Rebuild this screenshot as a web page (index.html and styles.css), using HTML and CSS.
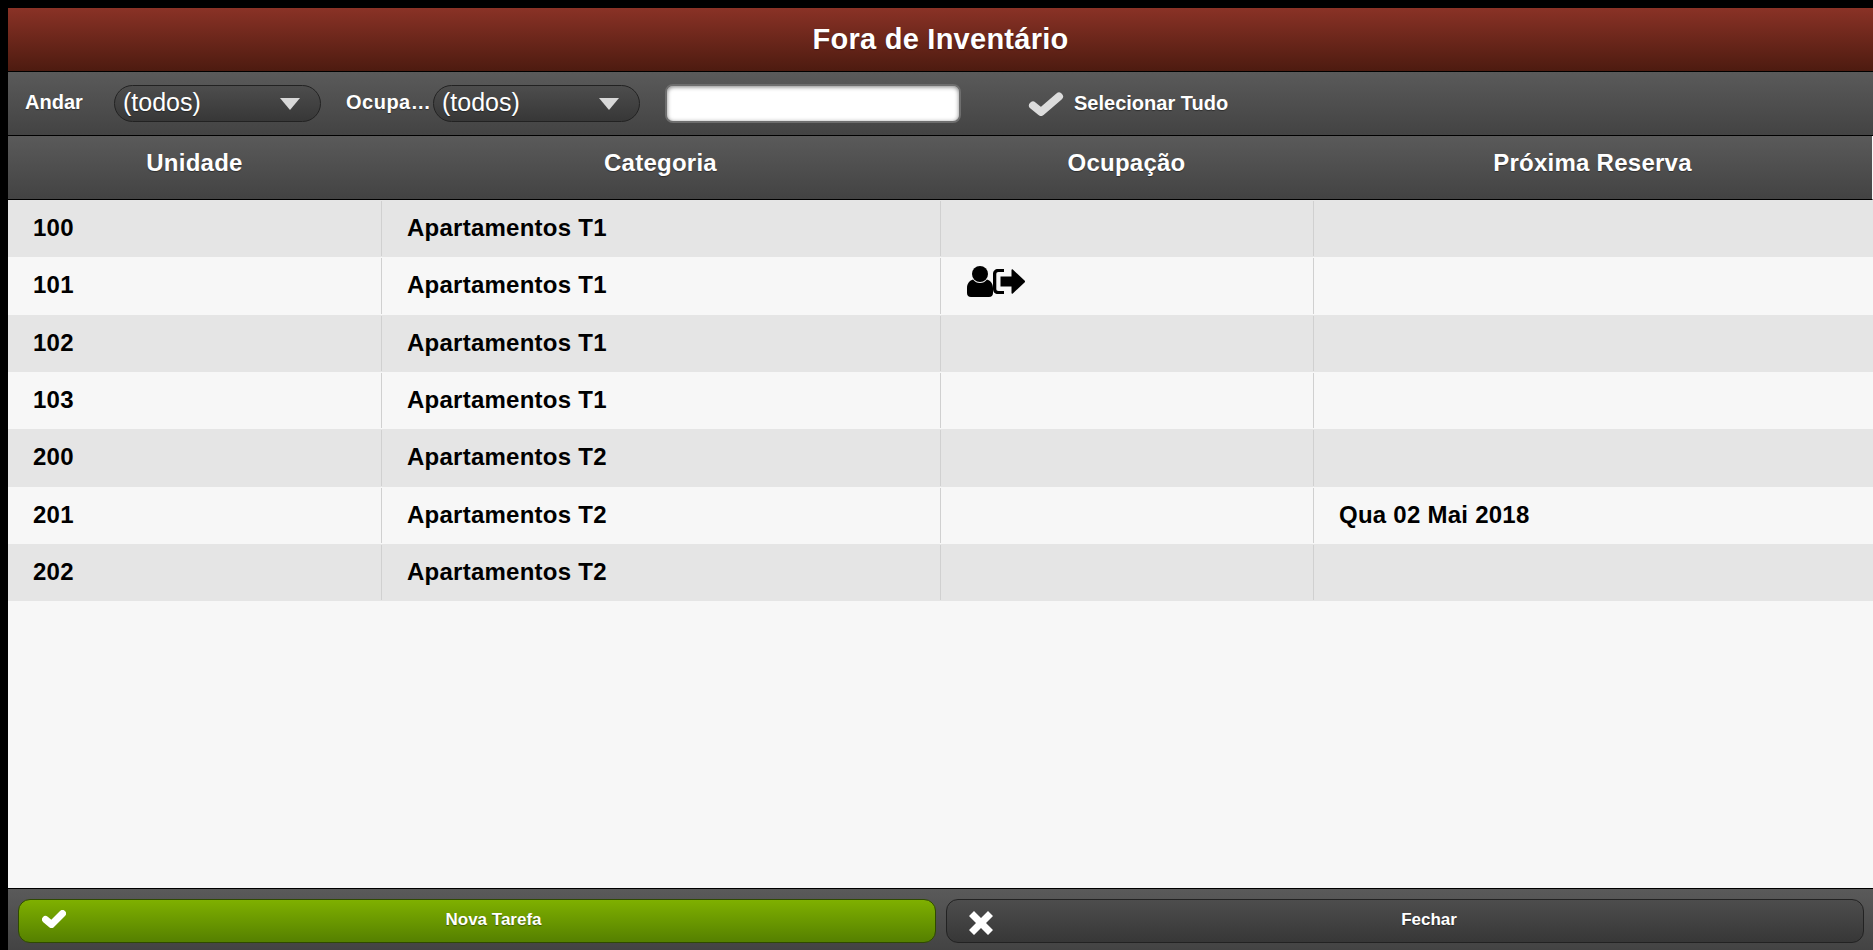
FILE: index.html
```html
<!DOCTYPE html>
<html lang="pt">

<head>
    <meta charset="UTF-8">
    <title>Fora de Inventário</title>
    <link rel="stylesheet" href="styles.css">
</head>

<body>
    <div class="page">
        <div class="title">Fora de Inventário</div>

        <div class="toolbar">
            <span class="label label-andar">Andar</span>
            <div class="select">
                <span>(todos)</span>
                <span class="arrow"></span>
            </div>
            <span class="label label-ocupa">Ocupa…</span>
            <div class="select">
                <span>(todos)</span>
                <span class="arrow"></span>
            </div>
            <input class="search" type="text">
            <div class="check-all">
                <svg class="check-icon" viewBox="0 0 36 24">
                    <path d="M5 13.500 L13 20 L31 4.500" fill="none" stroke="#dcdcdc" stroke-width="8" stroke-linecap="round" stroke-linejoin="round"/>
                </svg>
                <span>Selecionar Tudo</span>
            </div>
        </div>

        <div class="columns">
            <div>Unidade</div>
            <div>Categoria</div>
            <div>Ocupação</div>
            <div>Próxima Reserva</div>
        </div>

        <div class="list">
            <div class="row">
                <div class="cell">100</div>
                <div class="cell">Apartamentos T1</div>
                <div class="cell"></div>
                <div class="cell"></div>
            </div>
            <div class="row">
                <div class="cell">101</div>
                <div class="cell">Apartamentos T1</div>
                <div class="cell cell-icons">
                    <svg class="user-icon" viewBox="0 0 26 31">
                        <circle cx="13" cy="8" r="8"/>
                        <path d="M0 27 V22 C0 17 3 14.500 6 13.500 C8 16 10 17 13 17 C16 17 18 16 20 13.500 C23 14.500 26 17 26 22 V27 C26 29.500 24.500 31 22 31 H4 C1.500 31 0 29.500 0 27 Z"/>
                    </svg>
                    <svg class="out-icon" viewBox="0 0 32 25">
                        <path d="M11 0 H5 C2 0 0 2 0 5 V20 C0 23 2 25 5 25 H11 V22 H5.500 C4 22 3.300 21.300 3.300 19.800 V5.200 C3.300 3.700 4 3 5.500 3 H11 Z"/>
                        <path d="M7.500 7.500 H18.500 V1 C18.500 0.300 19.200 0 19.800 0.500 L31.500 11.500 C32.200 12.100 32.200 12.900 31.500 13.500 L19.800 24.500 C19.200 25 18.500 24.700 18.500 24 V17.500 H7.500 Z"/>
                    </svg>
                </div>
                <div class="cell"></div>
            </div>
            <div class="row">
                <div class="cell">102</div>
                <div class="cell">Apartamentos T1</div>
                <div class="cell"></div>
                <div class="cell"></div>
            </div>
            <div class="row">
                <div class="cell">103</div>
                <div class="cell">Apartamentos T1</div>
                <div class="cell"></div>
                <div class="cell"></div>
            </div>
            <div class="row">
                <div class="cell">200</div>
                <div class="cell">Apartamentos T2</div>
                <div class="cell"></div>
                <div class="cell"></div>
            </div>
            <div class="row">
                <div class="cell">201</div>
                <div class="cell">Apartamentos T2</div>
                <div class="cell"></div>
                <div class="cell">Qua 02 Mai 2018</div>
            </div>
            <div class="row">
                <div class="cell">202</div>
                <div class="cell">Apartamentos T2</div>
                <div class="cell"></div>
                <div class="cell"></div>
            </div>
        </div>

        <div class="footer">
            <div class="btn btn-green">
                <svg class="btn-icon" viewBox="0 0 24 18">
                    <path d="M3.500 9.500 L9.500 14.500 L20.500 3.500" fill="none" stroke="#fff" stroke-width="7" stroke-linecap="round" stroke-linejoin="round"/>
                </svg>
                <span>Nova Tarefa</span>
            </div>
            <div class="btn btn-dark">
                <svg class="btn-icon" viewBox="0 0 24 24">
                    <path d="M5 0 L12 7 L19 0 L24 5 L17 12 L24 19 L19 24 L12 17 L5 24 L0 19 L7 12 L0 5 Z" fill="#fff"/>
                </svg>
                <span>Fechar</span>
            </div>
        </div>
    </div>
</body>

</html>
```

FILE: styles.css
```css
html,
body {
    margin: 0;
    height: 100%;
    background-color: #000;
}

body {
    font-family: "Liberation Sans", Arial, sans-serif;
    font-weight: bold;
    overflow: hidden;
}

.page {
    display: flex;
    flex-direction: column;
    box-sizing: border-box;
    height: 100vh;
    padding: 8px 0 0 8px;
}

.title {
    height: 63px;
    border-bottom: 1px solid #000;
    background: linear-gradient(#8a3226, #4d1b10);
    color: #fff;
    font-size: 29px;
    letter-spacing: 0.25px;
    line-height: 63px;
    text-align: center;
    text-shadow: 0 1px 1px rgba(0, 0, 0, 0.4);
}

.toolbar {
    display: flex;
    align-items: center;
    height: 63px;
    border-bottom: 1px solid #000;
    background: linear-gradient(#5a5a5a, #434343);
    color: #fff;
    text-shadow: 0 1px 1px rgba(0, 0, 0, 0.4);
}

.label {
    font-size: 20px;
    margin-top: -2px;
}

.label-andar {
    width: 89px;
    padding-left: 17px;
}

.label-ocupa {
    width: 87px;
    padding-left: 25px;
    letter-spacing: 0.5px;
}

.select {
    display: flex;
    align-items: center;
    justify-content: space-between;
    box-sizing: border-box;
    width: 207px;
    height: 37px;
    padding: 0 20px 2px 8px;
    border: 1px solid #222;
    border-radius: 19px;
    background: linear-gradient(#4d4d4d, #373737);
    font-size: 25px;
    font-weight: normal;
}

.arrow {
    width: 0;
    height: 0;
    margin-top: 2px;
    border-left: 10px solid transparent;
    border-right: 10px solid transparent;
    border-top: 12px solid #d8d8d8;
}

.search {
    box-sizing: border-box;
    width: 296px;
    height: 39px;
    margin: 0 0 0 25px;
    padding: 0;
    border: 2px solid #6e6e6e;
    border-radius: 8px;
    background-color: #fff;
    box-shadow: inset 0 1px 4px rgba(0, 0, 0, 0.5);
}

.check-all {
    display: flex;
    align-items: center;
    gap: 10px;
    margin-left: 67px;
    font-size: 20px;
}

.check-icon {
    width: 36px;
    height: 24px;
}

.columns {
    display: grid;
    grid-template-columns: 373px 559px 373px 1fr;
    box-sizing: border-box;
    height: 64px;
    border-right: 1px solid #f7f7f7;
    border-bottom: 1px solid #000;
    background: linear-gradient(#5a5a5a, #434343);
    color: #fff;
    font-size: 24px;
    letter-spacing: 0.25px;
    line-height: 53px;
    text-align: center;
    text-shadow: 0 1px 1px rgba(0, 0, 0, 0.4);
}

.list {
    flex: 1;
    background-color: #f7f7f7;
    color: #000;
    font-size: 24px;
    letter-spacing: 0.25px;
}

.row {
    display: grid;
    grid-template-columns: 373px 559px 373px 1fr;
    height: 57.33px;
    background-color: #f7f7f7;
}

.row:nth-child(odd) {
    background-color: #e5e5e5;
}

.cell {
    margin: 1px 0;
    padding-left: 25px;
    line-height: 54px;
    border-left: 1px solid #d0d0d0;
}

.cell:first-child {
    border-left: 0;
}

.cell-icons {
    display: flex;
    align-items: flex-start;
    padding-top: 8px;
    padding-left: 26px;
}

.user-icon {
    width: 26px;
    height: 31px;
}

.out-icon {
    width: 32px;
    height: 25px;
    margin-top: 3px;
}

.footer {
    display: grid;
    grid-template-columns: 1fr 1fr;
    gap: 10px;
    box-sizing: border-box;
    height: 62px;
    padding: 10px 9px 7px 10px;
    border-top: 1px solid #000;
    background: linear-gradient(#5a5a5a, #434343);
}

.btn {
    position: relative;
    box-sizing: border-box;
    height: 44px;
    border-radius: 12px;
    color: #fff;
    font-size: 17px;
    line-height: 40px;
    text-align: center;
    text-shadow: 0 1px 1px rgba(0, 0, 0, 0.4);
}

.btn-green {
    padding-left: 33px;
    border: 1px solid #2f4a00;
    background: linear-gradient(#7fb000, #558000);
}

.btn-dark {
    padding-left: 48px;
    border: 1px solid #222;
    background: linear-gradient(#4d4d4d, #373737);
}

.btn-icon {
    position: absolute;
    left: 23px;
    top: 10px;
    width: 24px;
    height: 18px;
}

.btn-dark .btn-icon {
    left: 22px;
    top: 11px;
    height: 24px;
}
```
